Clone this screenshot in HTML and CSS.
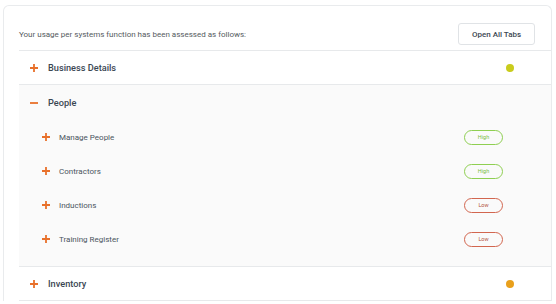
FILE: index.html
```html
<!DOCTYPE html>
<html lang="en">
<head>
    <meta charset="UTF-8" />
    <meta name="viewport" content="width=device-width, initial-scale=1.0"/>
    <title>Usage Assessment</title>
    <link rel="stylesheet" href="styles.css">
</head>
<body>
<div class="card">
    <div class="card-header">
        <p class="intro">Your usage per systems function has been assessed as follows:</p>
        <button type="button" class="open-all">Open All Tabs</button>
    </div>

    <div class="list">
        <div class="item">
            <div class="item-head">
                <svg class="toggle" viewBox="0 0 8 8"><path d="M0 4H8M4 0V8"/></svg>
                <span class="item-title">Business Details</span>
                <span class="dot dot-yellow"></span>
            </div>
        </div>

        <div class="item open">
            <div class="item-head">
                <svg class="toggle" viewBox="0 0 8 8"><path d="M0 4H8"/></svg>
                <span class="item-title">People</span>
            </div>
            <div class="sub-list">
                <div class="sub-item">
                    <svg class="toggle" viewBox="0 0 8 8"><path d="M0 4H8M4 0V8"/></svg>
                    <span class="sub-title">Manage People</span>
                    <span class="badge high">High</span>
                </div>
                <div class="sub-item">
                    <svg class="toggle" viewBox="0 0 8 8"><path d="M0 4H8M4 0V8"/></svg>
                    <span class="sub-title">Contractors</span>
                    <span class="badge high">High</span>
                </div>
                <div class="sub-item">
                    <svg class="toggle" viewBox="0 0 8 8"><path d="M0 4H8M4 0V8"/></svg>
                    <span class="sub-title">Inductions</span>
                    <span class="badge low">Low</span>
                </div>
                <div class="sub-item">
                    <svg class="toggle" viewBox="0 0 8 8"><path d="M0 4H8M4 0V8"/></svg>
                    <span class="sub-title">Training Register</span>
                    <span class="badge low">Low</span>
                </div>
            </div>
        </div>

        <div class="item">
            <div class="item-head">
                <svg class="toggle" viewBox="0 0 8 8"><path d="M0 4H8M4 0V8"/></svg>
                <span class="item-title">Inventory</span>
                <span class="dot dot-orange"></span>
            </div>
        </div>
    </div>
</div>
</body>
</html>
```

FILE: styles.css
```css
body {
    margin: 0;
    padding: 5px 4px 0 3px;
    font-family: Roboto, 'Liberation Sans', sans-serif;
    background-color: #ffffff;
}

.card {
    background-color: white;
    border: 1px solid #e9ebed;
    border-bottom: none;
    border-radius: 6px 6px 0 0;
    padding-left: 15px;
}

.card-header {
    display: flex;
    align-items: center;
    justify-content: space-between;
    padding: 17px 16px 5px 0;
}

.intro {
    margin: 0;
    font-size: 8px;
    color: #555b60;
}

.open-all {
    width: 77px;
    height: 22px;
    padding: 0;
    background-color: white;
    border: 1px solid #e0e3e6;
    border-radius: 3px;
    font-family: inherit;
    font-size: 8px;
    font-weight: 500;
    color: #3c4752;
    cursor: pointer;
}

.list {
    border-top: 1px solid #e7e9eb;
}

.item {
    border-bottom: 1px solid #e7e9eb;
}

.item.open {
    background-color: #fafafa;
}

.item-head {
    display: flex;
    align-items: center;
    height: 33px;
    padding: 0 37px 0 11px;
}

.item.open .item-head {
    height: 35px;
}

.toggle {
    width: 8px;
    height: 8px;
    flex-shrink: 0;
    fill: none;
    stroke: #e8702a;
    stroke-width: 1.8;
}

.item-title {
    flex: 1;
    margin-left: 10px;
    font-size: 9.2px;
    font-weight: 500;
    color: #3a4652;
}

.dot {
    width: 8px;
    height: 8px;
    border-radius: 50%;
}

.dot-yellow {
    background-color: #c9cc1c;
}

.dot-orange {
    background-color: #e9a01c;
}

.sub-list {
    padding-bottom: 10px;
}

.sub-item {
    display: flex;
    align-items: center;
    height: 34px;
    padding: 0 48px 0 23px;
}

.sub-title {
    flex: 1;
    margin-left: 9px;
    font-size: 8px;
    color: #4a5560;
}

.badge {
    width: 39px;
    height: 15px;
    box-sizing: border-box;
    border-radius: 8px;
    border: 1.6px solid;
    font-size: 5.5px;
    line-height: 12px;
    text-align: center;
}

.badge.high {
    border-color: #8fcf52;
    color: #78be44;
}

.badge.low {
    border-color: #d2664f;
    color: #b3503c;
}
```
